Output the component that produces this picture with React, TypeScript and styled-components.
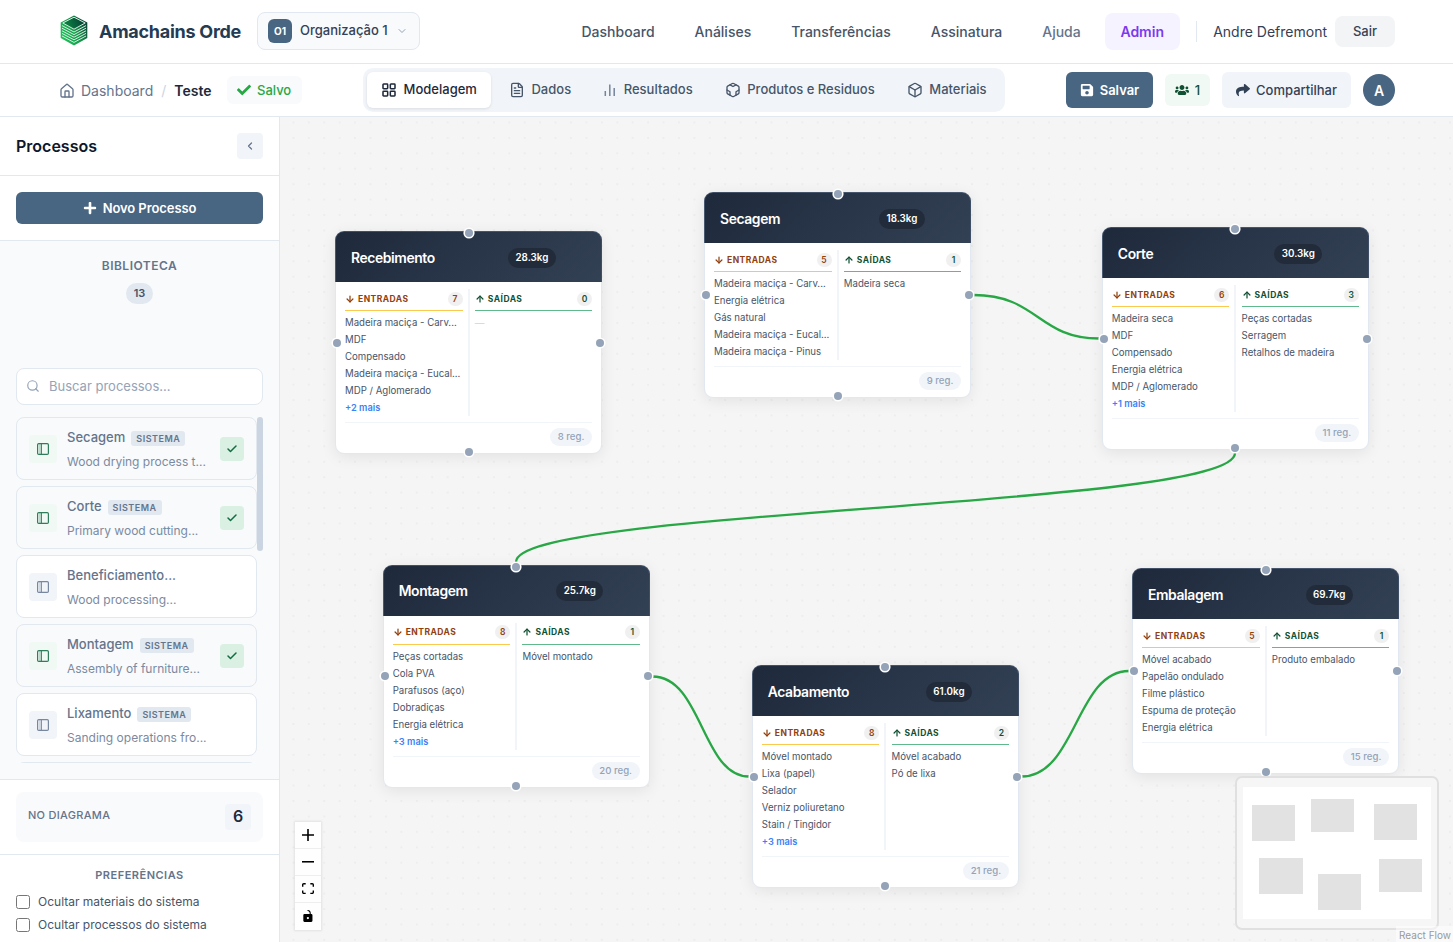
import React from "react";
import styled, { createGlobalStyle } from "styled-components";
import {
  ArrowDown,
  ArrowUp,
  Box,
  Check,
  ChevronDown,
  ChevronLeft,
  FileText,
  House,
  LayoutGrid,
  Search,
} from "lucide-react";
import { FaCheck, FaPlus, FaSave, FaShare, FaUsers } from "react-icons/fa";

type LibraryItem = {
  name: string;
  description: string;
  system?: boolean;
  used?: boolean;
};

type ProcessNode = {
  name: string;
  weight: string;
  x: number;
  y: number;
  badgeX: number;
  inputs: string[];
  inputCount: number;
  outputs: string[];
  records: number;
};

const library: LibraryItem[] = [
  { name: "Secagem", description: "Wood drying process t...", system: true, used: true },
  { name: "Corte", description: "Primary wood cutting...", system: true, used: true },
  { name: "Beneficiamento...", description: "Wood processing..." },
  { name: "Montagem", description: "Assembly of furniture...", system: true, used: true },
  { name: "Lixamento", description: "Sanding operations fro...", system: true },
];

const nodes: ProcessNode[] = [
  {
    name: "Recebimento",
    weight: "28.3kg",
    x: 335,
    y: 231,
    badgeX: 173,
    inputs: ["Madeira maciça - Carv...", "MDF", "Compensado", "Madeira maciça - Eucal...", "MDP / Aglomerado"],
    inputCount: 7,
    outputs: [],
    records: 8,
  },
  {
    name: "Secagem",
    weight: "18.3kg",
    x: 704,
    y: 192,
    badgeX: 175,
    inputs: ["Madeira maciça - Carv...", "Energia elétrica", "Gás natural", "Madeira maciça - Eucal...", "Madeira maciça - Pinus"],
    inputCount: 5,
    outputs: ["Madeira seca"],
    records: 9,
  },
  {
    name: "Corte",
    weight: "30.3kg",
    x: 1101.8,
    y: 227,
    badgeX: 172.5,
    inputs: ["Madeira seca", "MDF", "Compensado", "Energia elétrica", "MDP / Aglomerado"],
    inputCount: 6,
    outputs: ["Peças cortadas", "Serragem", "Retalhos de madeira"],
    records: 11,
  },
  {
    name: "Montagem",
    weight: "25.7kg",
    x: 382.7,
    y: 564.8,
    badgeX: 173.5,
    inputs: ["Peças cortadas", "Cola PVA", "Parafusos (aço)", "Dobradiças", "Energia elétrica"],
    inputCount: 8,
    outputs: ["Móvel montado"],
    records: 20,
  },
  {
    name: "Acabamento",
    weight: "61.0kg",
    x: 751.8,
    y: 665,
    badgeX: 174,
    inputs: ["Móvel montado", "Lixa (papel)", "Selador", "Verniz poliuretano", "Stain / Tingidor"],
    inputCount: 8,
    outputs: ["Móvel acabado", "Pó de lixa"],
    records: 21,
  },
  {
    name: "Embalagem",
    weight: "69.7kg",
    x: 1132,
    y: 568,
    badgeX: 173.5,
    inputs: ["Móvel acabado", "Papelão ondulado", "Filme plástico", "Espuma de proteção", "Energia elétrica"],
    inputCount: 5,
    outputs: ["Produto embalado"],
    records: 15,
  },
];

const edges = [
  "M973.5 295 C1038 295 1038 338.5 1099 338.5",
  "M1235 453 C1235 508 516 508 516 562",
  "M652.5 676.5 C702 676.5 702 776.5 749 776.5",
  "M1021.5 776.5 C1076 776.5 1076 671 1129 671",
];

const minimapNodes = [
  [1252, 805, 43, 36],
  [1311, 799, 43, 33],
  [1374, 804, 43, 36],
  [1259, 858, 44, 36],
  [1318, 874, 43, 36],
  [1379, 859, 43, 33],
];

const Logo = () => (
  <svg width="28" height="32" viewBox="0 0 28 32">
    <defs>
      <linearGradient id="logoSide" x1="0" y1="0.8" x2="1" y2="0.2">
        <stop offset="0" stopColor="#22c55e" />
        <stop offset="0.5" stopColor="#169c4b" />
        <stop offset="1" stopColor="#0b3b36" />
      </linearGradient>
      <linearGradient id="logoTop" x1="0" y1="0.6" x2="1" y2="0.4">
        <stop offset="0" stopColor="#0c8a42" />
        <stop offset="1" stopColor="#063f35" />
      </linearGradient>
    </defs>
    <path d="M14 .6 27.300 7.600v15.500L14 30.600.7 23.100V7.600z" fill="url(#logoSide)" />
    <path d="M14 2.200 25.200 8 14 14.200 2.800 8z" fill="url(#logoTop)" stroke="#e9fbf0" strokeWidth="0.9" />
    {[10.6, 13.2, 15.8, 18.4, 21].map((y) => (
      <path key={y} d={`M2 ${y} 14 ${y + 6.4} 26 ${y}`} fill="none" stroke="#e9fbf0" strokeWidth="0.9" />
    ))}
  </svg>
);

const BarsIcon = () => (
  <svg width="14" height="14" viewBox="0 0 14 14" fill="none" stroke="#74849b" strokeWidth="1.5">
    <path d="M2.300 8v5M6.800 1.500V13M11.200 5v8" />
  </svg>
);

const CycleIcon = () => (
  <svg
    width="16"
    height="16"
    viewBox="0 0 24 24"
    fill="none"
    stroke="currentColor"
    strokeWidth="2"
    strokeLinecap="round"
    strokeLinejoin="round"
  >
    <path d="M21 16V8a2 2 0 0 0-1-1.730l-7-4a2 2 0 0 0-2 0l-7 4A2 2 0 0 0 3 8v8a2 2 0 0 0 1 1.730l7 4a2 2 0 0 0 2 0l7-4A2 2 0 0 0 21 16z" />
    <path d="M7.500 4.200 12 6.800l4.500-2.600M7.500 19.800v-5.200L3 12M21 12l-4.500 2.600v5.200" />
  </svg>
);

const PanelIcon = () => (
  <svg width="14" height="14" viewBox="0 0 14 14" fill="none" stroke="currentColor">
    <rect x="1.600" y="1.600" width="10.800" height="10.800" rx="1.200" strokeWidth="1.200" />
    <path d="M5.300 1.600v10.800" strokeWidth="1.200" />
    <path d="M3.500 2v10" strokeWidth="1" opacity="0.25" />
  </svg>
);

const tabs = [
  { label: "Modelagem", icon: <LayoutGrid size={16} strokeWidth={2.3} /> },
  { label: "Dados", icon: <FileText size={16} /> },
  { label: "Resultados", icon: <BarsIcon /> },
  { label: "Produtos e Residuos", icon: <CycleIcon /> },
  { label: "Materiais", icon: <Box size={16} /> },
];

const ProcessCard = ({ node }: { node: ProcessNode }) => {
  const hidden = node.inputCount - node.inputs.length;
  return (
    <NodeCard $x={node.x} $y={node.y}>
      <NodeHeader>
        <NodeTitle $width={node.badgeX - 16}>{node.name}</NodeTitle>
        <Weight>{node.weight}</Weight>
      </NodeHeader>
      <Columns>
        <Column>
          <ColumnHead $kind="in">
            <ArrowDown size={10} strokeWidth={3} />
            ENTRADAS
            <Count $kind="in">{node.inputCount}</Count>
          </ColumnHead>
          {node.inputs.map((item) => (
            <Material key={item}>{item}</Material>
          ))}
          {hidden > 0 && <More>+{hidden} mais</More>}
        </Column>
        <Column>
          <ColumnHead $kind="out">
            <ArrowUp size={10} strokeWidth={3} />
            SAÍDAS
            <Count $kind="out">{node.outputs.length}</Count>
          </ColumnHead>
          {node.outputs.map((item) => (
            <Material key={item}>{item}</Material>
          ))}
          {node.outputs.length === 0 && <Empty>—</Empty>}
        </Column>
      </Columns>
      <NodeFooter>
        <Records>{node.records} reg.</Records>
      </NodeFooter>
      <Handle $side="top" />
      <Handle $side="left" />
      <Handle $side="right" />
      <Handle $side="bottom" />
    </NodeCard>
  );
};

const App = () => {
  return (
    <Page>
      <GlobalStyle />
      <TopBar>
        <Brand>
          <Logo />
          <h1>Amachains Orde</h1>
        </Brand>
        <OrgSelect>
          <OrgBadge>O1</OrgBadge>
          <OrgName>Organização 1</OrgName>
          <ChevronDown size={12} color="#94a3b8" />
        </OrgSelect>
        <Nav>
          <a>Dashboard</a>
          <a>Análises</a>
          <a>Transferências</a>
          <a>Assinatura</a>
          <a className="muted">Ajuda</a>
        </Nav>
        <AdminLink>Admin</AdminLink>
        <Divider />
        <UserName>Andre Defremont</UserName>
        <LogoutButton>Sair</LogoutButton>
      </TopBar>

      <ToolBar>
        <Breadcrumb>
          <House size={16} />
          <span>Dashboard</span>
          <i>/</i>
          <b>Teste</b>
        </Breadcrumb>
        <Saved>
          <FaCheck size={14} />
          Salvo
        </Saved>
        <Tabs>
          {tabs.map((tab, index) => (
            <Tab key={tab.label} $active={index === 0}>
              {tab.icon}
              <span>{tab.label}</span>
            </Tab>
          ))}
        </Tabs>
        <Actions>
          <SaveButton>
            <FaSave size={14} />
            Salvar
          </SaveButton>
          <Online>
            <FaUsers size={14} />1
          </Online>
          <ShareButton>
            <FaShare size={14} />
            Compartilhar
          </ShareButton>
          <Avatar>A</Avatar>
        </Actions>
      </ToolBar>

      <Main>
        <Sidebar>
          <SidebarHeader>
            <h2>Processos</h2>
            <CollapseButton>
              <ChevronLeft size={12} strokeWidth={2.5} />
            </CollapseButton>
          </SidebarHeader>
          <NewSection>
            <NewButton>
              <FaPlus size={14} />
              Novo Processo
            </NewButton>
          </NewSection>
          <Library>
            <LibraryTitle>BIBLIOTECA</LibraryTitle>
            <LibraryCount>13</LibraryCount>
            <SearchBox>
              <Search size={14} />
              <span>Buscar processos...</span>
            </SearchBox>
            <ListArea>
              <List>
                {library.map((item) => (
                  <ListItem key={item.name} $used={item.used}>
                    <ItemIcon $used={item.used}>
                      <PanelIcon />
                    </ItemIcon>
                    <ItemText>
                      <strong>
                        {item.name}
                        {item.system && <SystemTag>SISTEMA</SystemTag>}
                      </strong>
                      <p>{item.description}</p>
                    </ItemText>
                    {item.used && (
                      <UsedMark>
                        <Check size={12} strokeWidth={3} />
                      </UsedMark>
                    )}
                  </ListItem>
                ))}
                <ListItem $used />
              </List>
              <ScrollThumb />
            </ListArea>
          </Library>
          <DiagramSection>
            <DiagramBox>
              <span>NO DIAGRAMA</span>
              <DiagramCount>6</DiagramCount>
            </DiagramBox>
          </DiagramSection>
          <Preferences>
            <h3>PREFERÊNCIAS</h3>
            <label>
              <Checkbox />
              Ocultar materiais do sistema
            </label>
            <label>
              <Checkbox />
              Ocultar processos do sistema
            </label>
          </Preferences>
        </Sidebar>

        <Canvas>
          <EdgeLayer viewBox="280 117 1173 825">
            {edges.map((d) => (
              <path key={d} d={d} fill="none" stroke="#28a745" strokeWidth="2.3" />
            ))}
          </EdgeLayer>
          {nodes.map((node) => (
            <ProcessCard key={node.name} node={node} />
          ))}
          <Controls>
            <button>
              <svg viewBox="0 0 32 32">
                <path d="M32 18.133H18.133V32h-4.266V18.133H0v-4.266h13.867V0h4.266v13.867H32z" />
              </svg>
            </button>
            <button>
              <svg viewBox="0 0 32 5">
                <path d="M0 0h32v4.2H0z" />
              </svg>
            </button>
            <button>
              <svg viewBox="0 0 32 30">
                <path d="M3.692 4.63c0-.53.4-.938.939-.938h5.215V0H4.708C2.13 0 0 2.054 0 4.63v5.216h3.692V4.631zM27.354 0h-5.2v3.692h5.17c.53 0 .984.4.984.939v5.215H32V4.631A4.624 4.624 0 0027.354 0zm.954 24.83c0 .532-.4.94-.939.94h-5.215v3.768h5.215c2.577 0 4.631-2.13 4.631-4.707v-5.139h-3.692v5.139zm-23.677.94c-.531 0-.939-.4-.939-.94v-5.138H0v5.139c0 2.577 2.13 4.707 4.708 4.707h5.138V25.77H4.631z" />
              </svg>
            </button>
            <button>
              <svg viewBox="0 0 25 32">
                <path d="M21.333 10.667H19.81V7.619C19.81 3.429 16.38 0 12.19 0c-4.114 1.828-1.37 2.133.305 2.438 1.676.305 4.42 2.59 4.42 5.181v3.048H3.047A3.056 3.056 0 000 13.714v15.238A3.056 3.056 0 003.048 32h18.285a3.056 3.056 0 003.048-3.048V13.714a3.056 3.056 0 00-3.048-3.047zM12.19 24.533a3.056 3.056 0 01-3.047-3.047 3.056 3.056 0 013.047-3.048 3.056 3.056 0 013.048 3.048 3.056 3.056 0 01-3.048 3.047z" />
              </svg>
            </button>
          </Controls>
          <Minimap>
            <svg width="200" height="150" viewBox="1237 778 200 150">
              <rect x="1243" y="787" width="188" height="132" fill="#fff" />
              {minimapNodes.map(([x, y, w, h]) => (
                <rect key={`${x}-${y}`} x={x} y={y} width={w} height={h} fill="#e2e2e2" />
              ))}
            </svg>
          </Minimap>
          <Attribution>React Flow</Attribution>
        </Canvas>
      </Main>
    </Page>
  );
};

const GlobalStyle = createGlobalStyle`
  * {
    box-sizing: border-box;
  }

  body {
    margin: 0;
    background: #fff;
    font-family: Inter, "Liberation Sans", sans-serif;
  }

  h1, h2, h3, p {
    margin: 0;
  }

  svg {
    flex: none;
  }

  button {
    font-family: inherit;
    border: 0;
    padding: 0;
  }
`;

const Page = styled.div`
  display: flex;
  flex-direction: column;
  width: 100%;
  height: 942px;
  overflow: hidden;
`;

const TopBar = styled.header`
  display: flex;
  align-items: center;
  flex: none;
  height: 64px;
  padding: 0 58px 1px 60px;
  border-bottom: 1px solid #e2e8f0;
`;

const Brand = styled.div`
  display: flex;
  align-items: center;
  gap: 11px;

  h1 {
    width: 142px;
    padding-top: 1px;
    font-size: 18px;
    font-weight: 700;
    line-height: 24px;
    letter-spacing: -0.27px;
    white-space: nowrap;
    color: #243b53;
  }
`;

const OrgSelect = styled.div`
  display: flex;
  align-items: center;
  gap: 8px;
  width: 163px;
  height: 38px;
  margin: 0 0 1px 16px;
  padding: 0 10px;
  border: 1px solid #e2e8f0;
  border-radius: 8px;
  background: #f8fafc;
  color: #334155;
  font-size: 13px;
  font-weight: 500;
  white-space: nowrap;
`;

const OrgName = styled.span`
  margin-bottom: 2px;
`;

const OrgBadge = styled.span`
  display: flex;
  align-items: center;
  justify-content: center;
  width: 24px;
  height: 24px;
  border-radius: 6px;
  background: #486581;
  color: #fff;
  font-size: 10px;
  font-weight: 700;
`;

const Nav = styled.nav`
  display: flex;
  gap: 40px;
  margin-left: auto;
  margin-right: 24.5px;
  color: #475569;
  font-size: 14px;
  font-weight: 500;

  .muted {
    color: #64748b;
  }
`;

const AdminLink = styled.a`
  display: flex;
  align-items: center;
  justify-content: center;
  width: 75px;
  height: 37px;
  padding-right: 1px;
  border-radius: 8px;
  background: #f5f3ff;
  color: #7c3aed;
  font-size: 14px;
  font-weight: 600;
`;

const Divider = styled.div`
  width: 1px;
  height: 21px;
  margin: 0 16px;
  background: #e2e8f0;
`;

const UserName = styled.span`
  color: #334155;
  font-size: 14px;
  white-space: nowrap;
`;

const LogoutButton = styled.button`
  width: 60px;
  height: 31px;
  margin-left: 8px;
  border-radius: 8px;
  background: #f3f4f6;
  color: #374151;
  font-size: 13px;
  font-weight: 500;
`;

const ToolBar = styled.div`
  display: flex;
  align-items: center;
  flex: none;
  height: 53px;
  padding: 0 58px 0 59px;
  border-bottom: 1px solid #e2e8f0;
`;

const Breadcrumb = styled.div`
  display: flex;
  align-items: center;
  gap: 6px;
  width: 168px;
  padding-top: 1px;
  color: #64748b;
  font-size: 14px;
  white-space: nowrap;

  i {
    margin: 0 2px;
    font-style: normal;
    color: #cbd5e1;
  }

  b {
    font-weight: 600;
    color: #1e293b;
  }
`;

const Saved = styled.div`
  display: flex;
  align-items: center;
  gap: 6px;
  width: 75px;
  height: 28px;
  padding: 0 0 1px 10px;
  border-radius: 6px;
  background: #f8fafc;
  color: #28a745;
  font-size: 13px;
  font-weight: 500;
`;

const Tabs = styled.div`
  display: flex;
  gap: 4px;
  height: 44px;
  margin-left: 61px;
  padding: 4px;
  border-radius: 10px;
  background: #f1f5f9;
`;

const Tab = styled.div<{ $active: boolean }>`
  display: flex;
  align-items: center;
  gap: 6.6px;
  padding: 0 14px;
  border-radius: 6px;
  background: ${(p) => (p.$active ? "#fff" : "transparent")};
  box-shadow: ${(p) => (p.$active ? "0 1px 3px rgba(15, 23, 42, 0.1)" : "none")};
  color: ${(p) => (p.$active ? "#1e293b" : "#475569")};
  font-size: 13px;
  font-weight: 500;
  white-space: nowrap;

  span {
    margin-bottom: 2px;
  }
`;

const Actions = styled.div`
  display: flex;
  align-items: center;
  gap: 12px;
  margin-left: auto;
`;

const SaveButton = styled.button`
  display: flex;
  align-items: center;
  justify-content: center;
  gap: 6px;
  width: 87px;
  height: 36px;
  border-radius: 6px;
  background: #486581;
  color: #fff;
  font-size: 13px;
  font-weight: 600;
`;

const Online = styled.div`
  display: flex;
  align-items: center;
  justify-content: center;
  gap: 6px;
  width: 45px;
  height: 32px;
  border-radius: 6px;
  background: #f0f9f4;
  color: #0f5132;
  font-size: 13px;
  font-weight: 500;
`;

const ShareButton = styled(SaveButton)`
  width: 129px;
  background: #f1f5f9;
  color: #334155;
  font-weight: 500;
`;

const Avatar = styled.div`
  display: flex;
  align-items: center;
  justify-content: center;
  width: 32px;
  height: 32px;
  border-radius: 50%;
  background: #486581;
  color: #fff;
  font-size: 14px;
  font-weight: 600;
`;

const Main = styled.main`
  display: flex;
  flex: 1;
  min-height: 0;
`;

const Sidebar = styled.aside`
  display: flex;
  flex-direction: column;
  flex: none;
  width: 280px;
  border-right: 1px solid #e2e8f0;
  background: #fff;
`;

const SidebarHeader = styled.div`
  display: flex;
  align-items: center;
  justify-content: space-between;
  height: 59px;
  padding: 0 16px;
  border-bottom: 1px solid #e2e8f0;

  h2 {
    font-size: 16px;
    font-weight: 600;
    color: #0f172a;
  }
`;

const CollapseButton = styled.button`
  display: flex;
  align-items: center;
  justify-content: center;
  width: 26px;
  height: 26px;
  border-radius: 4px;
  background: #f1f5f9;
  color: #64748b;
`;

const NewSection = styled.div`
  height: 65px;
  padding: 16px;
  border-bottom: 1px solid #e2e8f0;
`;

const NewButton = styled(SaveButton)`
  width: 100%;
  height: 32px;
  letter-spacing: -0.08px;
`;

const Library = styled.section`
  display: flex;
  flex-direction: column;
  align-items: center;
  height: 539px;
  padding: 16px 16px 0;
  border-bottom: 1px solid #e2e8f0;
  background: #f8fafc;
`;

const LibraryTitle = styled.h3`
  line-height: 18px;
  font-size: 12px;
  font-weight: 600;
  letter-spacing: 0.5px;
  color: #64748b;
`;

const LibraryCount = styled.span`
  width: 27px;
  height: 21px;
  margin: 8px 0 64px;
  border-radius: 11px;
  background: #e2e8f0;
  color: #475569;
  font-size: 11px;
  font-weight: 600;
  line-height: 21px;
  text-align: center;
`;

const SearchBox = styled.div`
  display: flex;
  align-items: center;
  gap: 9px;
  width: 247px;
  height: 37px;
  flex: none;
  padding: 0 9px 1px;
  border: 1px solid #e2e8f0;
  border-radius: 8px;
  background: #fff;
  color: #94a3b8;
  font-size: 13px;

  span {
    margin-bottom: 1px;
  }
`;

const ListArea = styled.div`
  display: flex;
  width: 247px;
  height: 346px;
  margin-top: 12px;
  overflow: hidden;
`;

const List = styled.div`
  display: flex;
  flex-direction: column;
  gap: 6px;
  width: 241px;
`;

const ScrollThumb = styled.div`
  width: 6px;
  height: 134px;
  border-radius: 3px;
  background: #cbd5e1;
`;

const ListItem = styled.div<{ $used?: boolean }>`
  display: flex;
  align-items: center;
  flex: none;
  height: 63px;
  padding: 0 12px;
  border: 1px solid #e2e8f0;
  border-radius: 8px;
  background: ${(p) => (p.$used ? "#f8fafc" : "#fff")};
`;

const ItemIcon = styled.div<{ $used?: boolean }>`
  display: flex;
  align-items: center;
  justify-content: center;
  width: 28px;
  height: 28px;
  border-radius: 4px;
  background: ${(p) => (p.$used ? "#f0f9f4" : "#f1f5f9")};
  color: ${(p) => (p.$used ? "#2f7d5b" : "#7787a0")};
`;

const ItemText = styled.div`
  flex: 1;
  margin-left: 10px;
  padding-top: 1px;
  white-space: nowrap;

  strong {
    display: flex;
    align-items: center;
    gap: 6px;
    height: 20px;
    font-size: 13px;
    font-weight: 500;
    color: #64748b;
  }

  p {
    margin-top: 6px;
    font-size: 12px;
    line-height: 18px;
    color: #7b8aa1;
  }
`;

const SystemTag = styled.span`
  height: 15px;
  margin-top: 2px;
  padding: 0 5px;
  border-radius: 3px;
  background: #e2e8f0;
  color: #64748b;
  font-size: 9px;
  font-weight: 600;
  line-height: 15px;
  letter-spacing: 0.5px;
`;

const UsedMark = styled.div`
  display: flex;
  align-items: center;
  justify-content: center;
  width: 24px;
  height: 24px;
  border-radius: 4px;
  background: #d9f0e2;
  color: #146c43;
`;

const DiagramSection = styled.div`
  height: 75px;
  padding: 12px 16px;
  border-bottom: 1px solid #e2e8f0;
`;

const DiagramBox = styled.div`
  display: flex;
  align-items: center;
  justify-content: space-between;
  height: 50px;
  padding: 0 12px;
  border-radius: 8px;
  background: #f8fafc;
  color: #64748b;
  font-size: 11px;
  font-weight: 500;
  letter-spacing: 0.3px;

  span:first-child {
    margin-bottom: 4px;
  }
`;

const DiagramCount = styled.span`
  width: 26px;
  height: 26px;
  border-radius: 4px;
  background: #f1f5f9;
  color: #1e293b;
  font-size: 16px;
  font-weight: 600;
  line-height: 25px;
  letter-spacing: 0;
  text-align: center;
`;

const Preferences = styled.div`
  display: flex;
  flex-direction: column;
  padding: 12px 16px 0;

  h3 {
    margin-bottom: 6px;
    color: #64748b;
    font-size: 11px;
    font-weight: 600;
    line-height: 17px;
    letter-spacing: 0.5px;
    text-align: center;
  }

  label {
    display: flex;
    align-items: center;
    gap: 8px;
    height: 23px;
    color: #475569;
    font-size: 12px;
  }
`;

const Checkbox = styled.span`
  width: 14px;
  height: 14px;
  border: 1px solid #767676;
  border-radius: 2.5px;
  background: #fff;
`;

const Canvas = styled.section`
  position: relative;
  flex: 1;
  overflow: hidden;
  background-color: #f5f5f5;
  background-image: radial-gradient(circle, #e2e2e2 0.5px, transparent 0.8px);
  background-size: 15.43px 15.43px;
  background-position: 5.7px 13.2px;
`;

const EdgeLayer = styled.svg`
  position: absolute;
  inset: 0;
  width: 1173px;
  height: 825px;
`;

const NodeCard = styled.article<{ $x: number; $y: number }>`
  position: absolute;
  left: ${(p) => p.$x - 280}px;
  top: ${(p) => p.$y - 117}px;
  width: 267px;
  border: 1.5px solid #e2e8f0;
  border-radius: 9px;
  background: #fff;
  box-shadow: 0 3px 15px rgba(0, 0, 0, 0.08);
`;

const NodeHeader = styled.div`
  display: flex;
  align-items: center;
  height: 51px;
  margin: -1px -1px 0;
  padding: 1px 0 0 15px;
  border: 1px solid rgba(96, 115, 140, 0.5);
  border-width: 1px 1px 0;
  border-radius: 9px 9px 0 0;
  background: linear-gradient(135deg, #1e293b, #334155);
`;

const NodeTitle = styled.h3<{ $width: number }>`
  width: ${(p) => p.$width}px;
  color: #fff;
  font-size: 13.9px;
  font-weight: 600;
  letter-spacing: -0.4px;
`;

const Weight = styled.span`
  height: 20px;
  padding: 0 7.5px;
  border-radius: 10px;
  background: #222b39;
  color: #fff;
  font-size: 9.8px;
  font-weight: 600;
  line-height: 20px;
`;

const Columns = styled.div`
  display: grid;
  grid-template-columns: 124.5px 1fr;
  padding: 7px 9px 0;
`;

const Column = styled.div`
  min-width: 0;

  &:first-child {
    padding-right: 5px;
    border-right: 2px solid #f1f5f9;
  }

  &:last-child {
    padding-left: 5.3px;
  }
`;

const ColumnHead = styled.div<{ $kind: "in" | "out" }>`
  display: flex;
  align-items: center;
  gap: 3px;
  height: 22px;
  padding-bottom: 2px;
  margin-bottom: 3.4px;
  border-bottom: 1.5px solid ${(p) => (p.$kind === "in" ? "#fbc94d" : "#5fb98c")};
  color: ${(p) => (p.$kind === "in" ? "#92400e" : "#0f5132")};
  font-size: 8.5px;
  font-weight: 700;
  letter-spacing: 0.47px;
`;

const Count = styled.span<{ $kind: "in" | "out" }>`
  min-width: 15px;
  height: 14px;
  margin-left: auto;
  padding: 0 4.5px;
  border-radius: 7px;
  background: #f0f0f0;
  color: ${(p) => (p.$kind === "in" ? "#92400e" : "#0f5132")};
  font-size: 8.5px;
  font-weight: 600;
  line-height: 14px;
  letter-spacing: 0;
  text-align: center;
`;

const Material = styled.div`
  height: 16.950px;
  color: #475569;
  font-size: 9.65px;
  line-height: 17px;
  white-space: nowrap;
`;

const More = styled(Material)`
  color: #3b82f6;
  font-size: 9.25px;
  font-weight: 600;
`;

const Empty = styled(Material)`
  color: #cbd5e1;
`;

const NodeFooter = styled.div`
  display: flex;
  justify-content: flex-end;
  height: 31px;
  margin: 6px 9px 0;
  padding-top: 5px;
  border-top: 1px solid #f1f5f9;
`;

const Records = styled.span`
  height: 18px;
  padding: 0 7.7px;
  border-radius: 9px;
  background: #f1f5f9;
  color: #94a3b8;
  font-size: 9.6px;
  font-weight: 500;
  line-height: 17px;
`;

const Handle = styled.span<{ $side: "top" | "left" | "right" | "bottom" }>`
  position: absolute;
  width: 8px;
  height: 8px;
  border-radius: 50%;
  background: #94a3b8;
  box-shadow: 0 0 0 1.6px #fff;
  ${(p) => p.$side}: -3px;
  ${(p) =>
    p.$side === "top" || p.$side === "bottom"
      ? "left: calc(50% - 4px);"
      : "top: calc(50% - 4px);"}
`;

const Controls = styled.div`
  position: absolute;
  left: 15px;
  bottom: 12px;
  display: flex;
  flex-direction: column;
  box-shadow: 0 0 2px 1px rgba(0, 0, 0, 0.08);

  button {
    display: flex;
    align-items: center;
    justify-content: center;
    width: 26px;
    height: 27px;
    padding: 4px;
    border-bottom: 1px solid #eee;
    background: #fefefe;
  }

  button:last-child {
    border-bottom-color: #fefefe;
  }

  svg {
    width: 12px;
    max-height: 12px;
  }
`;

const Minimap = styled.div`
  position: absolute;
  right: 14px;
  bottom: 12px;
  width: 204px;
  height: 154px;
  border: 2px solid #e0e0e0;
  border-radius: 7px;
  background: #f6f6f6;
  overflow: hidden;
`;

const Attribution = styled.div`
  position: absolute;
  right: 0;
  bottom: 0;
  height: 16px;
  padding: 3px 2px 0 3px;
  background: rgba(255, 255, 255, 0.5);
  color: #999;
  font-size: 10px;
  line-height: 13px;
`;

export default App;
